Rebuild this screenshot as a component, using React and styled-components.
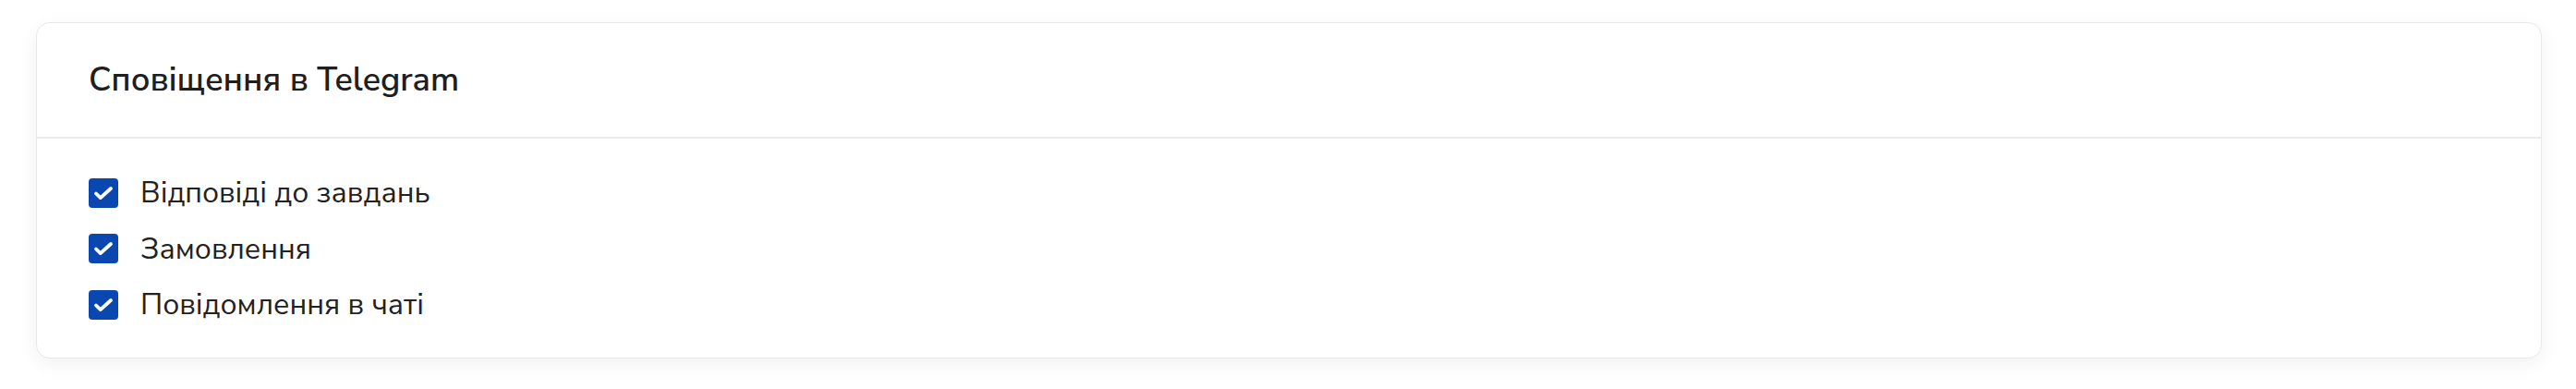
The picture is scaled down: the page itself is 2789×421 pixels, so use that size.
import React from "react";
import styled, { createGlobalStyle } from "styled-components";

const Global = createGlobalStyle`
  html, body { margin: 0; padding: 0; background: #ffffff; }
  body { font-family: "Nunito Sans", "Nunito", "Noto Sans", "Open Sans", sans-serif; color: #222222; }
  * { box-sizing: border-box; }
`;

const Page = styled.div`
  padding: 24px 37px 32px 39px;
`;

const Card = styled.section`
  background: #ffffff;
  border: 1.5px solid #e8e8ee;
  border-radius: 15px;
  box-shadow: 0 6px 22px rgba(20, 20, 40, 0.06);
  overflow: hidden;
`;

const Header = styled.header`
  height: 124.5px;
  display: flex;
  align-items: center;
  padding: 0 56px;
  border-bottom: 2px solid #ebebef;
`;

const Title = styled.h2`
  margin: 0;
  font-size: 36px;
  font-weight: 600;
  color: #1f1f1f;
  letter-spacing: 0;
`;

const Body = styled.div`
  display: flex;
  flex-direction: column;
  gap: 28.5px;
  padding: 43px 56px 41.5px;
`;

const Row = styled.label`
  display: flex;
  align-items: center;
  gap: 24px;
  height: 32px;
  cursor: pointer;
`;

const Box = styled.span`
  width: 32px;
  height: 32px;
  flex: 0 0 32px;
  border-radius: 4px;
  background: ${(p) => (p.$checked ? "#0a47b1" : "#ffffff")};
  border: ${(p) => (p.$checked ? "none" : "2px solid #9aa0ab")};
  display: flex;
  align-items: center;
  justify-content: center;
`;

const Label = styled.span`
  font-size: 32px;
  font-weight: 400;
  color: #222222;
`;

const Check = () => (
  <svg width="32" height="32" viewBox="0 0 32 32" fill="none">
    <path d="M8 16.5l4.8 4.6L24 11" stroke="#ffffff" strokeWidth="3.8" strokeLinecap="round" strokeLinejoin="round" />
  </svg>
);

const items = ["Відповіді до завдань", "Замовлення", "Повідомлення в чаті"];

export default function App() {
  return (
    <>
      <Global />
      <Page>
        <Card>
          <Header>
            <Title>Сповіщення в Telegram</Title>
          </Header>
          <Body>
            {items.map((t) => (
              <Row key={t}>
                <Box $checked>
                  <Check />
                </Box>
                <Label>{t}</Label>
              </Row>
            ))}
          </Body>
        </Card>
      </Page>
    </>
  );
}
